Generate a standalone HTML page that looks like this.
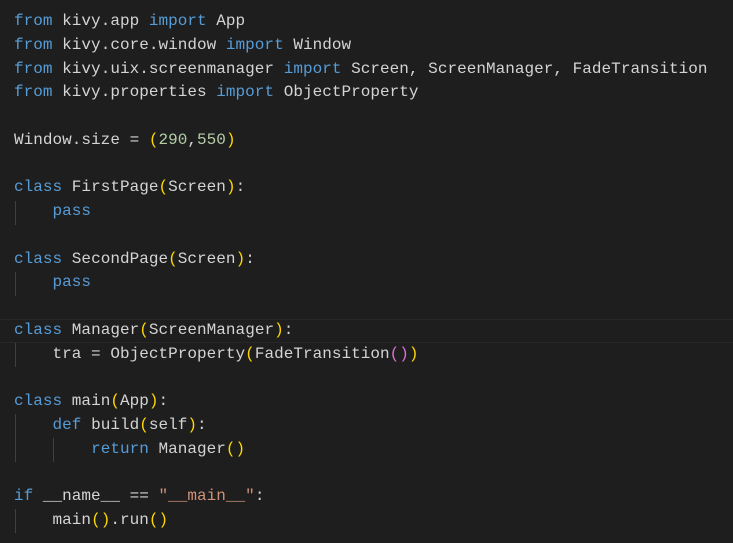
<!DOCTYPE html><html><head><style>
body{margin:0;width:733px;height:543px;background:#1e1e1e;overflow:hidden;position:relative}
pre{margin:0;position:absolute;left:14px;top:10px;font-family:"Liberation Mono",monospace;font-size:16px;line-height:23.76px;color:#d4d4d4;letter-spacing:0.03px}
.k{color:#569cd6}.b{color:#ffd700}.p{color:#da70d6}.s{color:#ce9178}.n{color:#b5cea8}
.g{position:absolute;width:1px;background:#404040}
.hl{position:absolute;left:0;width:733px;top:319px;height:22px;border-top:1px solid #282828;border-bottom:1px solid #282828}
</style></head><body>
<div class="hl"></div>
<div class="g" style="left:15px;top:201px;height:24px"></div>
<div class="g" style="left:15px;top:272px;height:24px"></div>
<div class="g" style="left:15px;top:343px;height:24px"></div>
<div class="g" style="left:15px;top:414px;height:48px"></div>
<div class="g" style="left:53px;top:438px;height:24px"></div>
<div class="g" style="left:15px;top:509px;height:24px"></div>
<pre><span class="k">from</span> kivy.app <span class="k">import</span> App
<span class="k">from</span> kivy.core.window <span class="k">import</span> Window
<span class="k">from</span> kivy.uix.screenmanager <span class="k">import</span> Screen, ScreenManager, FadeTransition
<span class="k">from</span> kivy.properties <span class="k">import</span> ObjectProperty

Window.size = <span class="b">(</span><span class="n">290</span>,<span class="n">550</span><span class="b">)</span>

<span class="k">class</span> FirstPage<span class="b">(</span>Screen<span class="b">)</span>:
    <span class="k">pass</span>

<span class="k">class</span> SecondPage<span class="b">(</span>Screen<span class="b">)</span>:
    <span class="k">pass</span>

<span class="k">class</span> Manager<span class="b">(</span>ScreenManager<span class="b">)</span>:
    tra = ObjectProperty<span class="b">(</span>FadeTransition<span class="p">()</span><span class="b">)</span>

<span class="k">class</span> main<span class="b">(</span>App<span class="b">)</span>:
    <span class="k">def</span> build<span class="b">(</span>self<span class="b">)</span>:
        <span class="k">return</span> Manager<span class="b">()</span>

<span class="k">if</span> __name__ == <span class="s">"__main__"</span>:
    main<span class="b">()</span>.run<span class="b">()</span></pre>
</body></html>
